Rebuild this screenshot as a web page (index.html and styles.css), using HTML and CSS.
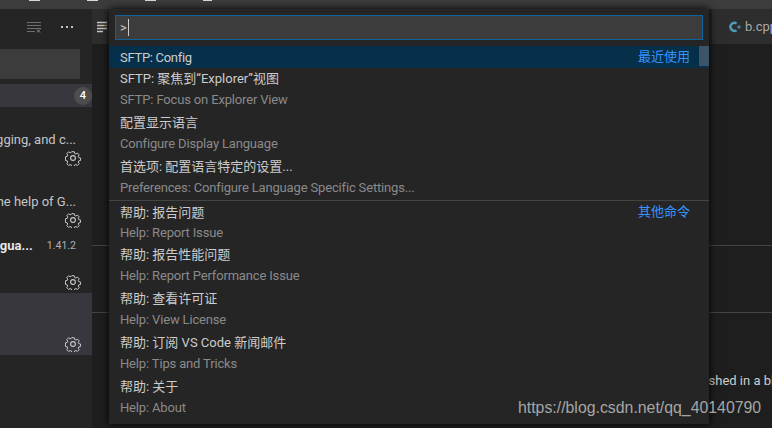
FILE: index.html
```html
<!DOCTYPE html>
<html lang="zh">
<head>
<meta charset="utf-8">
<title>Command Palette</title>
<link rel="stylesheet" href="styles.css">
</head>
<body>
<div class="titlebar">
  <span class="tb-ic tb-a"></span><span class="tb-ic tb-b"></span><span class="tb-ic tb-c"></span><span class="tb-ic tb-d"></span>
</div>
<div class="main">
  <aside class="sidebar">
    <div class="side-head">
      <svg class="clear" width="16" height="16" viewBox="0 0 16 16" fill="none" stroke="#6f6f6f" stroke-width="1"><path d="M1 3.5h14M1 6.5h14M1 9.5h14M1 12.5h8"/><path d="M11 10.5l3 3M14 10.5l-3 3" stroke="#8a8a8a"/></svg>
      <span class="dots"><i></i><i></i><i></i></span>
    </div>
    <div class="search"></div>
    <div class="filter"><span class="badge">4</span></div>
    <div class="ext">
      <div class="ext-title"></div>
      <div class="ext-desc">Debugging, and c...</div>
      <div class="ext-foot"><svg class="gear" viewBox="0 0 16 16"><use href="#gear"/></svg></div>
    </div>
    <div class="ext">
      <div class="ext-title"></div>
      <div class="ext-desc">With the help of G...</div>
      <div class="ext-foot"><svg class="gear" viewBox="0 0 16 16"><use href="#gear"/></svg></div>
    </div>
    <div class="ext">
      <div class="ext-title"><b>Langua...</b><span class="ver">1.41.2</span></div>
      <div class="ext-desc"></div>
      <div class="ext-foot"><svg class="gear" viewBox="0 0 16 16"><use href="#gear"/></svg></div>
    </div>
    <div class="ext ext-sel">
      <div class="ext-title"></div>
      <div class="ext-desc"></div>
      <div class="ext-foot"><svg class="gear" viewBox="0 0 16 16"><use href="#gear"/></svg></div>
    </div>
  </aside>
  <section class="editor">
    <div class="tabs">
      <div class="tab-left">
        <svg width="14" height="14" viewBox="0 0 14 14" fill="none" stroke-width="1.4"><path d="M1 2.5h10M1 5.5h7M1 8.5h10M1 11.5h6" stroke="#c5c5c5"/><path d="M8 5.5h3" stroke="#b8975a"/></svg>
      </div>
      <div class="tab-right">
        <svg class="cpp" width="14" height="14" viewBox="0 0 14 14" fill="none"><path d="M8.6 3.4A4 4 0 1 0 8.6 10.2" stroke="#519aba" stroke-width="2.4"/><path d="M9 7h4M11 5v4" stroke="#519aba" stroke-width="1"/></svg>
        <span class="tab-name">b.cpp</span>
      </div>
    </div>
    <div class="content">
      <div class="rule rule-a"></div>
      <div class="rule rule-b"></div>
      <p class="body-text">It is published in a block</p>
    </div>
  </section>
</div>

<div class="palette">
  <div class="input-wrap"><div class="input">&gt;<span class="caret"></span></div></div>
  <div class="list">
    <div class="row row-one row-sel"><span class="cmd">SFTP: Config</span><span class="tag">最近使用</span></div>
    <div class="row"><div class="cmd">SFTP: 聚焦到“Explorer”视图</div><div class="sub">SFTP: Focus on Explorer View</div></div>
    <div class="row"><div class="cmd">配置显示语言</div><div class="sub">Configure Display Language</div></div>
    <div class="row"><div class="cmd">首选项: 配置语言特定的设置...</div><div class="sub">Preferences: Configure Language Specific Settings...</div></div>
    <div class="row row-sep"><div class="cmd">帮助: 报告问题</div><div class="sub">Help: Report Issue</div><span class="tag tag-abs">其他命令</span></div>
    <div class="row"><div class="cmd">帮助: 报告性能问题</div><div class="sub">Help: Report Performance Issue</div></div>
    <div class="row"><div class="cmd">帮助: 查看许可证</div><div class="sub">Help: View License</div></div>
    <div class="row"><div class="cmd">帮助: 订阅 VS Code 新闻邮件</div><div class="sub">Help: Tips and Tricks</div></div>
    <div class="row"><div class="cmd">帮助: 关于</div><div class="sub">Help: About</div></div>
    <div class="thumb"></div>
  </div>
</div>
<div class="watermark">https://blog.csdn.net/qq_40140790</div>

<svg class="defs" width="0" height="0">
  <symbol id="gear" viewBox="0 0 16 16">
    <path fill="none" stroke="#c9c9c9" stroke-width="1.1" stroke-linejoin="round" d="M6.6 1h2.8l.4 2 1.4.6 1.7-1.1 2 2-1.1 1.7.6 1.4 2 .4v2.8l-2 .4-.6 1.4 1.1 1.7-2 2-1.7-1.1-1.4.6-.4 2H6.6l-.4-2-1.4-.6-1.7 1.1-2-2 1.1-1.7-.6-1.4-2-.4V6.6l2-.4.6-1.4-1.1-1.7 2-2 1.7 1.1 1.4-.6z" transform="translate(.8 .8) scale(.9)"/>
    <circle cx="8" cy="8" r="2.4" fill="none" stroke="#c9c9c9" stroke-width="1.1"/>
  </symbol>
</svg>
</body>
</html>
```
FILE: styles.css
```css
* { box-sizing: border-box; }
html, body { margin: 0; height: 100%; }
body {
  width: 772px; height: 428px; overflow: hidden; position: relative;
  display: flex; flex-direction: column;
  background: #1e1e1e; color: #ccc;
  font: 13px/18px Roboto, "Noto Sans CJK SC", sans-serif;
}
.defs { position: absolute; }

.titlebar { height: 9px; flex: none; background: #3c3c3c; display: flex; }
.tb-ic { height: 1px; background: #d8d8d8; }
.tb-a { width: 11px; margin-left: 29px; }
.tb-b { width: 11px; margin-left: 47px; }
.tb-c { width: 11px; margin-left: 47px; }
.tb-d { width: 9px; margin-left: 47px; }

.main { flex: 1; display: flex; min-height: 0; }

.sidebar { width: 92px; flex: none; background: #252526; overflow: hidden; }
.side-head { height: 35px; display: flex; align-items: center; justify-content: flex-end; gap: 19px; padding-right: 19px; }
.dots { display: flex; gap: 3px; }
.dots i { width: 2px; height: 2px; background: #c5c5c5; display: block; }
.search { height: 30px; width: 80px; margin-top: 5px; background: #3c3c3c; }
.filter { height: 23px; margin-top: 5px; background: #37373d; display: flex; align-items: center; justify-content: flex-end; }
.badge { width: 18px; height: 18px; border-radius: 50%; background: #4d4d4d; color: #fff; font-size: 11px; line-height: 18px; text-align: center; font-weight: 500; }

.ext { height: 62px; display: flex; flex-direction: column; padding: 6px 16px 0 0; }
.ext-sel { background: #37373d; }
.ext-title { height: 18px; display: flex; justify-content: flex-end; align-items: center; white-space: nowrap; font-size: 13px; gap: 14px; color: #e7e7e7; }
.ext-title b { font-weight: 700; }
.ver { font-size: 10.5px; color: #b0b0b0; }
.ext-desc { height: 18px; white-space: nowrap; font-size: 13px; color: #c4c4c4; display: flex; justify-content: flex-end; }
.ext-foot { height: 18px; padding-top: 1px; display: flex; justify-content: flex-end; margin-right: -5px; }
.gear { width: 16px; height: 16px; flex: none; }

.editor { flex: 1; min-width: 0; display: flex; flex-direction: column; }
.tabs { height: 35px; flex: none; background: #252526; display: flex; justify-content: space-between; }
.tab-left { width: 18px; background: #2d2d2d; display: flex; align-items: center; padding-left: 4px; }
.tab-right { width: 60px; background: #2d2d2d; display: flex; align-items: center; padding-left: 16px; gap: 3px; white-space: nowrap; overflow: hidden; }
.cpp { flex: none; }
.tab-name { color: #a8a8a8; font-size: 13px; }
.content { flex: 1; display: flex; flex-direction: column; overflow: hidden; }
.rule { height: 1px; background: #444; flex: none; }
.rule-a { margin-top: 201px; }
.rule-b { margin-top: 66px; }
.body-text { margin: 59px -23px 0 0; white-space: nowrap; color: #ccc; font-size: 13px; display: flex; justify-content: flex-end; }

.palette {
  position: absolute; left: 109px; top: 9px; width: 600px; height: 415px;
  background: #252526; box-shadow: 0 0 8px #000;
  display: flex; flex-direction: column;
}
.input-wrap { padding: 6px; flex: none; }
.input { height: 25px; background: #3c3c3c; border: 1px solid #0e639c; color: #ccc; padding-left: 4px; font-size: 13px; display: flex; align-items: center; }
.caret { width: 1px; height: 17px; background: #ccc; margin-left: 1px; }
.list { position: relative; flex: 1; }
.row { height: 44px; padding: 0 19px 0 11px; position: relative; }
.row-one { height: 22px; display: flex; justify-content: space-between; align-items: center; }
.row-sel { background: #062f4a; }
.row-sep { border-top: 1px solid #444; }
.cmd { height: 22px; line-height: 22px; color: #ccc; white-space: nowrap; }
.row-one .cmd { letter-spacing: -.3px; line-height: 24px; }
.row-sep .cmd { line-height: 24px; }
.sub { height: 22px; line-height: 20px; color: #8a8a8a; white-space: nowrap; letter-spacing: -.16px; }
.tag { color: #3794ff; }
.tag-abs { position: absolute; right: 19px; top: 0; line-height: 22px; }
.thumb { position: absolute; right: 0; top: 0; width: 10px; height: 20px; background: #3d5468; }

.watermark {
  position: absolute; left: 518px; top: 398px;
  font: 15.85px/20px "Liberation Sans", sans-serif; color: #a6a6a6;
  white-space: nowrap;
}
```
